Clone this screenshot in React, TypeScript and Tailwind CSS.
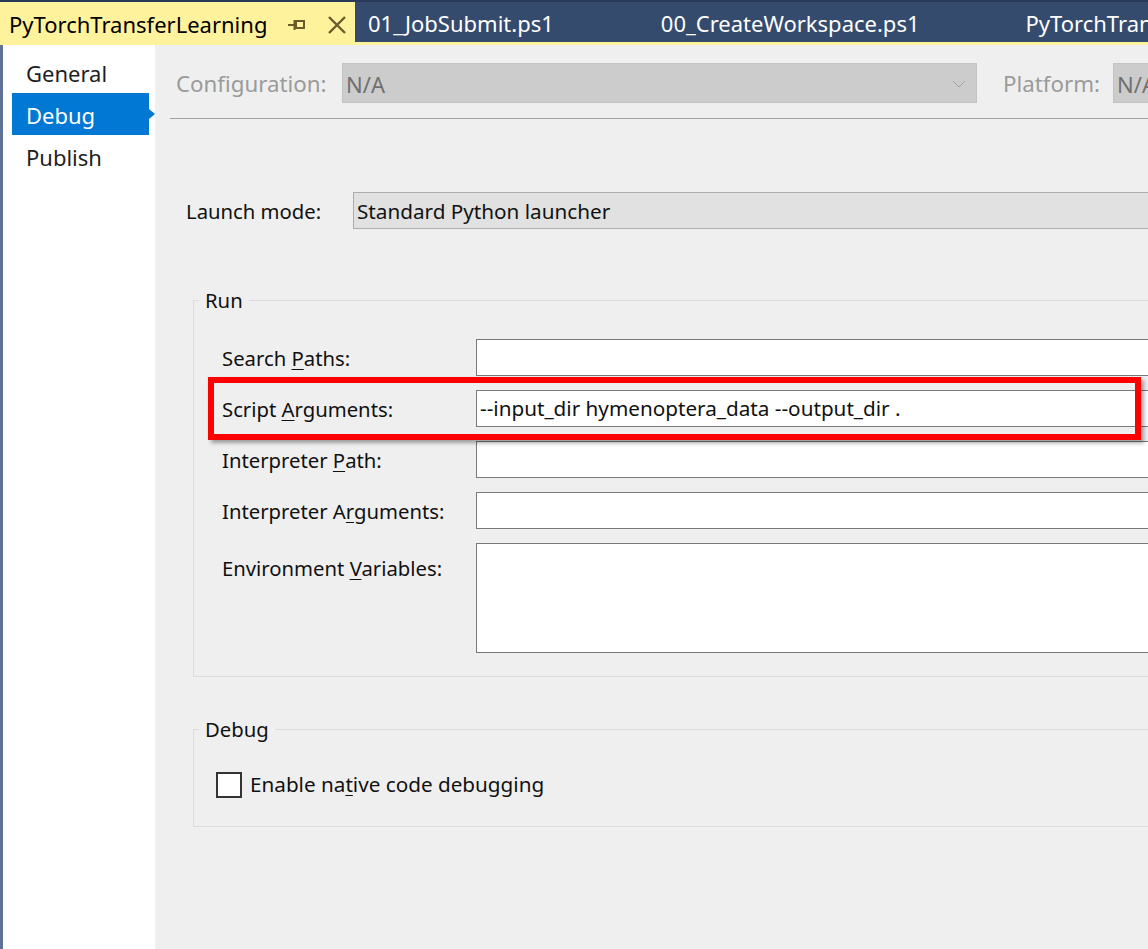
import React from "react";

const font = { fontFamily: '"Noto Sans", "Open Sans", sans-serif' };

function U({ children }: { children: React.ReactNode }) {
  return <span className="underline underline-offset-[3px] decoration-1">{children}</span>;
}

function PinIcon() {
  return (
    <svg width="20" height="14" viewBox="0 0 20 14" className="text-[#6b5a2a]">
      <path d="M1 7h6M7.5 2v10" stroke="currentColor" strokeWidth="2" fill="none" />
      <rect x="9" y="3" width="8" height="7" stroke="currentColor" strokeWidth="2" fill="none" />
    </svg>
  );
}

function CloseIcon() {
  return (
    <svg width="20" height="20" viewBox="0 0 20 20" className="text-[#6b5a2a]">
      <path d="M2 2l16 16M18 2L2 18" stroke="currentColor" strokeWidth="2.4" fill="none" />
    </svg>
  );
}

function Row({ label, value }: { label: React.ReactNode; value?: string }) {
  return (
    <div className="flex items-center h-[37px]">
      <div className="w-[254px] text-[20.3px] text-[#111] pt-[2px]">{label}</div>
      <div className="flex-1 h-full bg-white border border-[#7a7a7a] flex items-center pl-[3px] text-[20.7px] text-[#111] whitespace-nowrap">
        {value}
      </div>
    </div>
  );
}

export default function App() {
  return (
    <div className="relative w-[1148px] h-[949px] overflow-hidden flex flex-col bg-[#efefef]" style={font}>
      {/* tab well */}
      <div className="h-[45px] bg-[#354b6d] border-t-2 border-[#293a58] flex flex-col">
        <div className="flex flex-1 items-stretch">
          <div className="w-[355px] bg-[#fff29d] flex items-center pl-[9px] pr-[10px] -mb-[3px] pt-[2px]">
            <span className="text-[22px] text-black whitespace-nowrap">PyTorchTransferLearning</span>
            <span className="ml-[20px]"><PinIcon /></span>
            <span className="ml-[20px]"><CloseIcon /></span>
          </div>
          <div className="flex items-center text-[22px] text-white whitespace-nowrap pt-[2px]">
            <span className="ml-[13px]">01_JobSubmit.ps1</span>
            <span className="ml-[107px]">00_CreateWorkspace.ps1</span>
            <span className="ml-[106px]">PyTorchTransferLearning</span>
          </div>
        </div>
        <div className="h-[3px] bg-[#fff29d]" />
      </div>

      <div className="flex flex-1 min-h-0">
        <div className="w-[3px] bg-[#5f7197]" />
        {/* side nav */}
        <div className="w-[152px] bg-white pt-[6px] flex flex-col">
          <div className="ml-[9px] w-[137px] h-[42px] flex items-center pl-[14px] pt-[2px] text-[22px] text-[#1e1e1e]">General</div>
          <div className="relative ml-[9px] w-[137px] h-[42px] flex items-center pl-[14px] pt-[2px] text-[22px] text-white bg-[#0078d4]">
            Debug
            <span className="absolute right-[-6px] top-[16px] w-0 h-0 border-y-[5px] border-y-transparent border-l-[6px] border-l-[#0078d4]" />
          </div>
          <div className="ml-[9px] w-[137px] h-[42px] flex items-center pl-[14px] pt-[2px] text-[22px] text-[#1e1e1e]">Publish</div>
        </div>

        {/* page */}
        <div className="flex-1 min-w-0 pt-[18px]">
          <div className="flex items-center pl-[21px] whitespace-nowrap">
            <span className="w-[166px] shrink-0 text-[22.3px] text-[#9b9b9b] pt-[2px]">Configuration:</span>
            <div className="w-[635px] h-[40px] shrink-0 bg-[#cccccc] border border-[#c3c3c3] flex items-center justify-between pl-[3px] pr-[10px] pt-[2px]">
              <span className="text-[22px] text-[#707070]">N/A</span>
              <svg width="14" height="8" viewBox="0 0 14 8"><path d="M1 1l6 6 6-6" stroke="#a0a0a0" strokeWidth="1" fill="none" /></svg>
            </div>
            <span className="ml-[26px] w-[110px] shrink-0 text-[22.3px] text-[#9b9b9b] pt-[2px]">Platform:</span>
            <div className="w-[200px] h-[40px] shrink-0 bg-[#cccccc] border border-[#c3c3c3] flex items-center pl-[3px] pt-[2px]">
              <span className="text-[22px] text-[#707070]">N/A</span>
            </div>
          </div>
          <div className="ml-[15px] mt-[15px] h-px bg-[#a0a0a0]" />

          <div className="flex items-center pl-[31px] mt-[73px] mr-[-4px] whitespace-nowrap">
            <span className="w-[167px] shrink-0 text-[20.3px] text-[#111] pt-[2px]">Launch mode:</span>
            <div className="flex-1 h-[37px] bg-[#e1e1e1] border border-[#adadad] flex items-center pl-[3px] pt-[2px] text-[20.7px] text-[#111]">
              Standard Python launcher
            </div>
          </div>

          <fieldset className="ml-[38px] mt-[58px] border border-[#dcdcdc] mr-[-4px]">
            <legend className="ml-[5px] px-[6px] text-[20.3px] text-[#111] leading-[26px]">Run</legend>
            <div className="flex flex-col gap-[14px] pl-[28px] pt-[26px] pb-[23px]">
              <Row label={<>Search <U>P</U>aths:</>} />
              <Row label={<>Script <U>A</U>rguments:</>} value="--input_dir hymenoptera_data --output_dir ." />
              <Row label={<>Interpreter <U>P</U>ath:</>} />
              <Row label={<>Interpreter A<U>r</U>guments:</>} />
              <div className="flex h-[110px]">
                <div className="w-[254px] pt-[10px] text-[20.3px] text-[#111]">Environment <U>V</U>ariables:</div>
                <div className="flex-1 h-full bg-white border border-[#7a7a7a]" />
              </div>
            </div>
          </fieldset>

          <fieldset className="ml-[38px] mt-[39px] border border-[#dcdcdc] mr-[-4px]">
            <legend className="ml-[5px] px-[6px] text-[20.3px] text-[#111] leading-[26px]">Debug</legend>
            <label className="flex items-center pl-[22px] pt-[27px] pb-[26px]">
              <span className="w-[26px] h-[26px] border-2 border-[#333] bg-white" />
              <span className="ml-[8px] text-[20.7px] text-[#111]">Enable na<U>t</U>ive code debugging</span>
            </label>
          </fieldset>
        </div>
      </div>

      {/* annotation box */}
      <div className="absolute left-[208px] top-[377px] w-[933px] h-[63px] border-[6px] border-[#ff0000] shadow-[3px_3px_4px_rgba(0,0,0,0.35)]" />
    </div>
  );
}
